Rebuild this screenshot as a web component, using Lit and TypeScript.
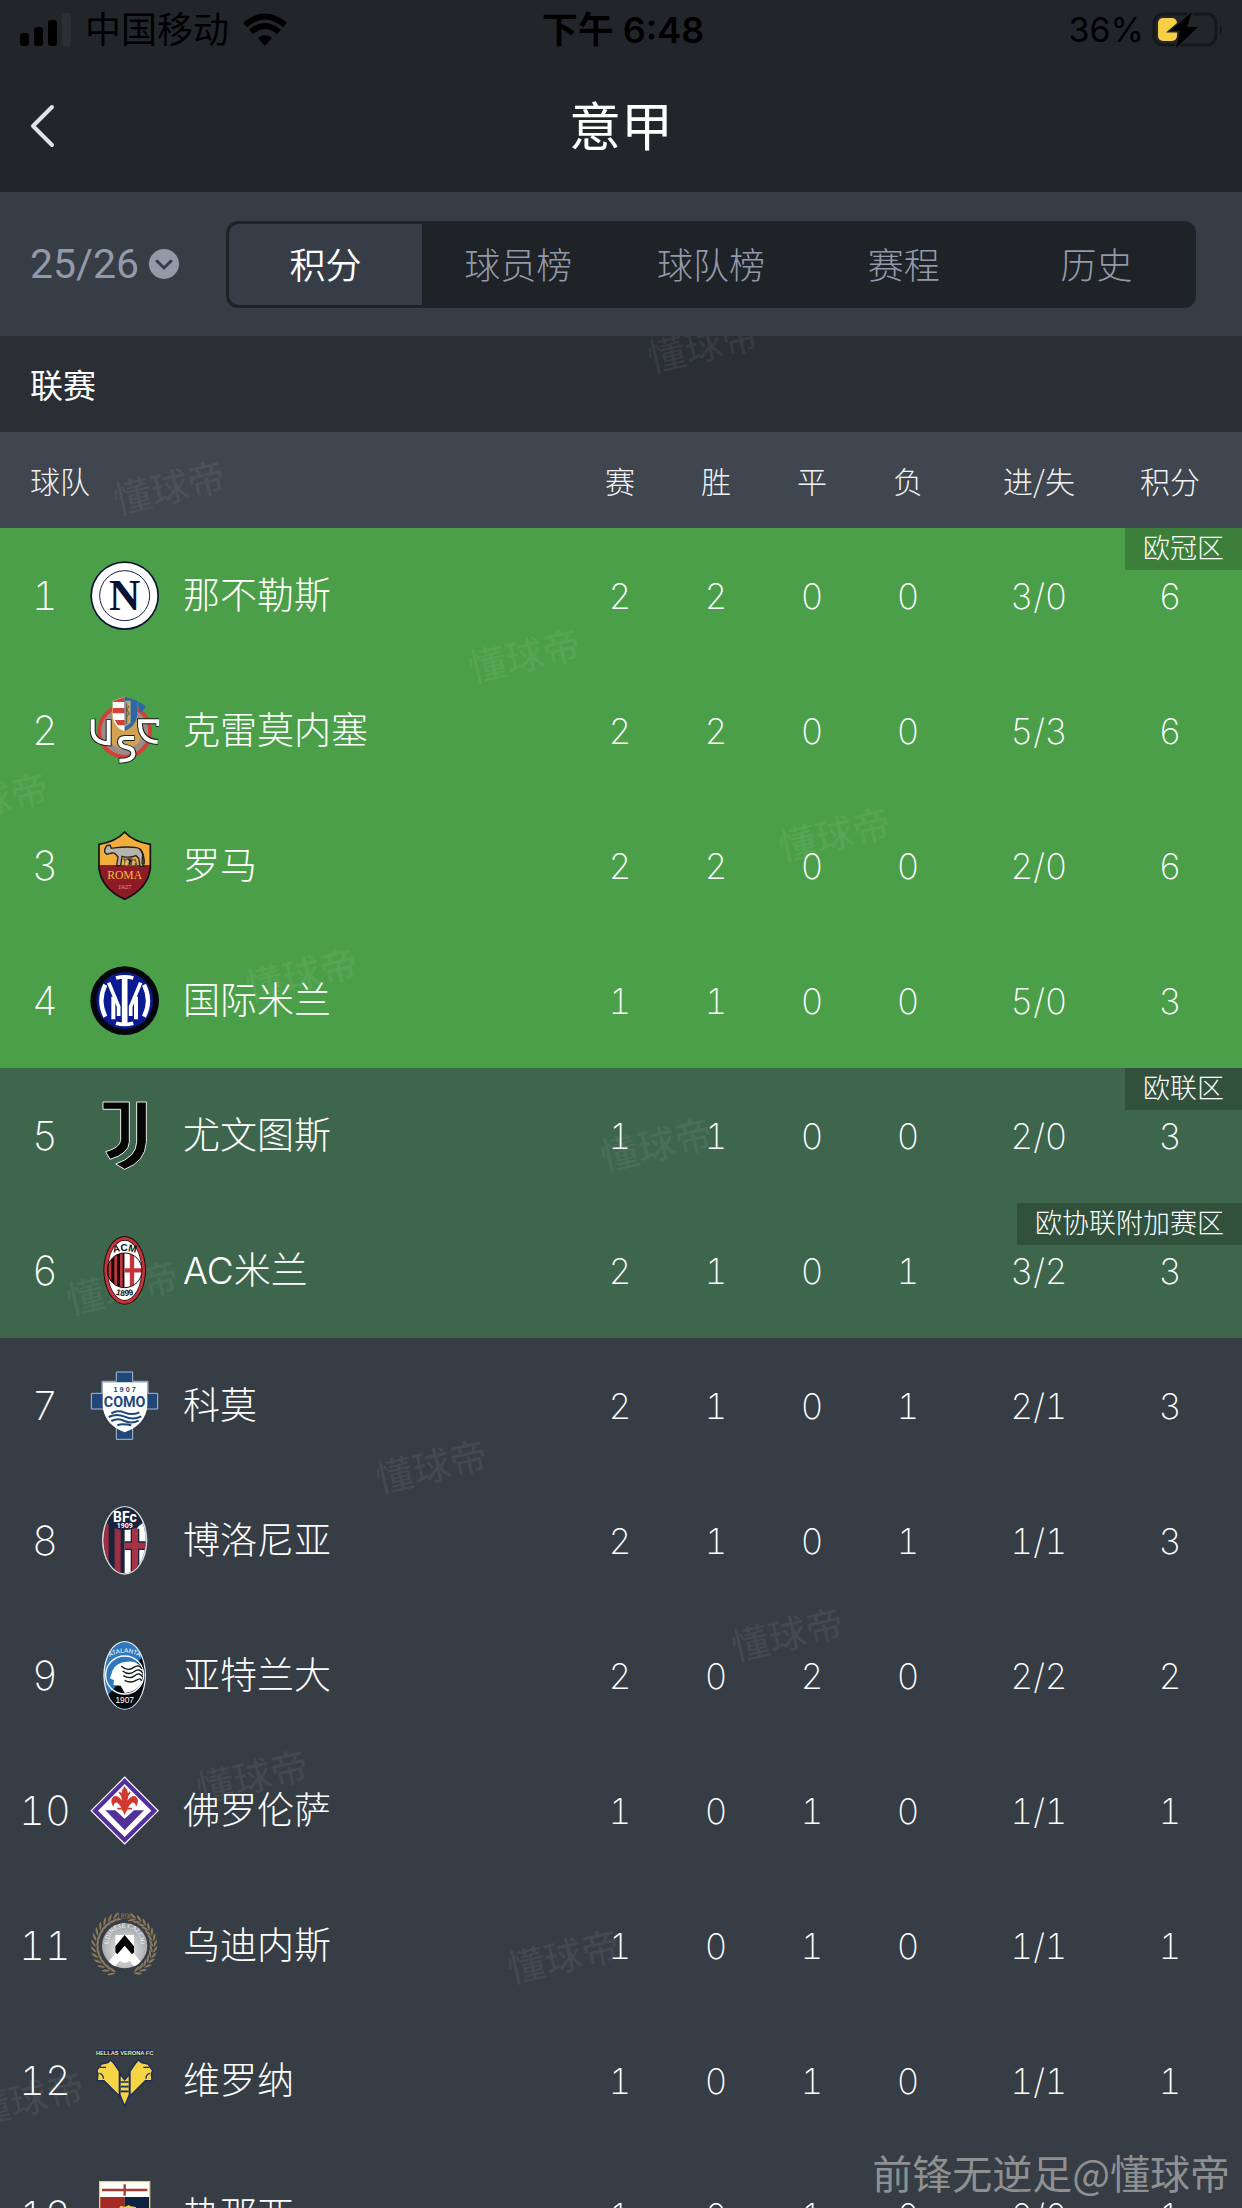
import { LitElement, html, svg, css, nothing } from "lit";
import { customElement, property, state } from "lit/decorators.js";

type Zone = "ucl" | "uel" | "none";

interface Team {
  rank: number;
  id: string;
  name: string;
  stats: string[];
  zone: Zone;
  badge?: string;
}

const TEAMS: Team[] = [
  { rank: 1, id: "napoli", name: "那不勒斯", stats: ["2", "2", "0", "0", "3/0", "6"], zone: "ucl", badge: "欧冠区" },
  { rank: 2, id: "cremonese", name: "克雷莫内塞", stats: ["2", "2", "0", "0", "5/3", "6"], zone: "ucl" },
  { rank: 3, id: "roma", name: "罗马", stats: ["2", "2", "0", "0", "2/0", "6"], zone: "ucl" },
  { rank: 4, id: "inter", name: "国际米兰", stats: ["1", "1", "0", "0", "5/0", "3"], zone: "ucl" },
  { rank: 5, id: "juventus", name: "尤文图斯", stats: ["1", "1", "0", "0", "2/0", "3"], zone: "uel", badge: "欧联区" },
  { rank: 6, id: "milan", name: "AC米兰", stats: ["2", "1", "0", "1", "3/2", "3"], zone: "uel", badge: "欧协联附加赛区" },
  { rank: 7, id: "como", name: "科莫", stats: ["2", "1", "0", "1", "2/1", "3"], zone: "none" },
  { rank: 8, id: "bologna", name: "博洛尼亚", stats: ["2", "1", "0", "1", "1/1", "3"], zone: "none" },
  { rank: 9, id: "atalanta", name: "亚特兰大", stats: ["2", "0", "2", "0", "2/2", "2"], zone: "none" },
  { rank: 10, id: "fiorentina", name: "佛罗伦萨", stats: ["1", "0", "1", "0", "1/1", "1"], zone: "none" },
  { rank: 11, id: "udinese", name: "乌迪内斯", stats: ["1", "0", "1", "0", "1/1", "1"], zone: "none" },
  { rank: 12, id: "verona", name: "维罗纳", stats: ["1", "0", "1", "0", "1/1", "1"], zone: "none" },
  { rank: 13, id: "genoa", name: "热那亚", stats: ["1", "0", "1", "0", "0/0", "1"], zone: "none" },
];

const COLUMNS = ["赛", "胜", "平", "负", "进/失", "积分"];
const TABS = ["积分", "球员榜", "球队榜", "赛程", "历史"];

/* Centres of the repeated brand mark, relative to the board. */
const MARKS: [number, number][] = [
  [703, 8], [169, 150], [524, 318], [-8, 462], [834, 497], [301, 637], [656, 807],
  [122, 950], [431, 1129], [787, 1297], [252, 1439], [563, 1619], [28, 1761],
];

const leaves = () => {
  const out = [];
  for (let i = 0; i < 13; i++) {
    const a = 14 + i * 11.5;
    for (const side of [-1, 1]) {
      const t = ((90 + side * (176 - a)) * Math.PI) / 180;
      const x = 104 + Math.cos(t + Math.PI) * -86;
      const y = 104 + Math.sin(t) * -86;
      const deg = (t * 180) / Math.PI;
      out.push(svg`<g transform="translate(${x} ${y}) rotate(${-deg + side * 90})">
        <path d="M0 0Q10 -14 24 -14Q16 -2 0 0ZM0 2Q12 12 24 10Q14 -2 0 2Z" fill="#8d7a5c"/></g>`);
    }
  }
  return out;
};

const CRESTS: Record<string, unknown> = {
  napoli: svg`
    <circle cx="104" cy="104" r="103" fill="#0a1233"/><circle cx="104" cy="104" r="98" fill="#fff"/>
    <circle cx="104" cy="104" r="75" fill="none" stroke="#1a2145" stroke-width="3"/>
    <text x="104" y="146" class="serif" font-size="130" font-weight="700" fill="#0a1233">N</text>`,
  cremonese: svg`
    <circle cx="104" cy="106" r="76" fill="#d3a152" stroke="#d2403a" stroke-width="13"/>
    <circle cx="104" cy="106" r="62" fill="none" stroke="#9a8c8c" stroke-width="16"/>
    <path d="M66 34Q104 72 142 34V132Q104 150 66 132Z" fill="#d3a152"/>
    <path d="M68 14L104 2V106Q72 94 68 62Z" fill="#fff"/>
    <path d="M70 14L104 3V18H68ZM68 36H104V52H68ZM74 72H104V88H84Z" fill="#d2403a"/>
    <path d="M104 2L142 14V58Q138 92 104 106Z" fill="#2f66a8"/>
    <path d="M142 18Q158 20 168 34L152 50Z" fill="#2f66a8"/>
    <path d="M106 14H122V80L106 92Z" fill="#b9a873"/><path d="M110 22V84M118 30L110 40L118 52L110 62" stroke="#594f37" stroke-width="3" fill="none"/>
    <g fill="none" stroke-linejoin="miter">
      <path d="M8 68V104Q10 140 56 142V70M134 126H104Q90 126 90 138Q90 150 110 154Q132 158 130 176Q126 194 86 194M206 92V76H150V88Q154 136 204 138" stroke="#17201a" stroke-width="18"/>
      <path d="M8 70V104Q10 140 56 142V72M132 126H104Q90 126 90 138Q90 150 110 154Q132 158 130 176Q126 194 88 194M205 90V76H150V88Q154 136 203 138" stroke="#fff" stroke-width="12"/>
    </g>`,
  roma: svg`
    <path d="M104 3Q130 32 181 40V112Q174 172 104 205Q34 172 27 112V40Q78 32 104 3Z" fill="#f1ae3c"/>
    <path d="M27 102H181V112Q174 172 104 205Q34 172 27 112Z" fill="#8d1b26"/>
    <path d="M44 56L50 44L60 42L64 52L80 50Q110 46 140 50Q156 54 158 70L156 96L162 106H150L146 82L138 74Q120 82 96 76L92 104H80L84 78Q74 64 66 66L50 70L44 64Z" fill="#b5b3ad" stroke="#23201c" stroke-width="4"/>
    <path d="M150 54Q164 70 162 100" fill="none" stroke="#23201c" stroke-width="5"/>
    <path d="M102 82L112 104M110 80L126 86L120 106M134 84L140 106" stroke="#57534c" stroke-width="6"/>
    <path d="M106 88Q114 80 118 92L114 104H102ZM126 90Q134 82 138 94L134 104H124Z" fill="#d9b567" stroke="#4a3c22" stroke-width="2"/>
    <text x="104" y="144" class="serif" font-size="35" fill="#f3bd4a">ROMA</text>
    <text x="104" y="173" class="serif" font-size="20" fill="#dba98c">1927</text>
    <path d="M104 3Q130 32 181 40V112Q174 172 104 205Q34 172 27 112V40Q78 32 104 3Z" fill="none" stroke="#111" stroke-width="5"/>`,
  inter: svg`
    <circle cx="104" cy="104" r="103" fill="#05070d"/><circle cx="104" cy="104" r="85" fill="#0b1a92"/>
    <g fill="none" stroke="#fff">
      <path d="M104 34V174" stroke-width="17"/>
      <path d="M78 36Q104 29 130 36M78 172Q104 179 130 172" stroke-width="11"/>
      <path d="M46 56Q22 104 46 152M162 56Q186 104 162 152" stroke-width="13"/>
      <path d="M70 160V92M138 160V92" stroke-width="12"/>
      <path d="M56 50L86 122V150M152 50L122 122V150" stroke-width="11"/>
    </g>`,
  juventus: svg`
    <g fill="#050505" stroke="#e9efe9" stroke-width="3">
      <path d="M39 3H118V124Q116 158 60 175L47 152Q90 140 92 118V25H39Z"/>
      <path d="M140 3H169V124Q166 182 104 205L77 189Q140 168 140 122Z"/>
    </g>`,
  milan: svg`
    <ellipse cx="104" cy="103" rx="64" ry="103" fill="#1a0d0d"/>
    <ellipse cx="104" cy="103" rx="61" ry="100" fill="#c5343a"/>
    <ellipse cx="104" cy="103" rx="52" ry="91" fill="#15100f"/>
    <ellipse cx="104" cy="103" rx="50" ry="89" fill="#fff"/>
    <clipPath id="acm"><circle cx="104" cy="103" r="52"/></clipPath>
    <g clip-path="url(#acm)">
      <path d="M50 50H104V156H50Z" fill="#120c0c"/><path d="M60 50V156M77 50V156M94 50V156" stroke="#c5343a" stroke-width="8"/>
      <path d="M104 50H160V156H104Z" fill="#fff"/><path d="M126 50V156M104 103H160" stroke="#c5343a" stroke-width="13"/>
    </g>
    <circle cx="104" cy="103" r="52" fill="none" stroke="#15100f" stroke-width="3"/>
    <path id="acm-t" d="M62 54Q104 36 146 54" fill="none"/><path id="acm-b" d="M68 172Q104 188 140 172" fill="none"/>
    <text class="sans" font-size="30" font-weight="700" fill="#111"><textPath href="#acm-t" startOffset="50%">ACM</textPath></text>
    <text class="sans" font-size="25" font-weight="700" fill="#111"><textPath href="#acm-b" startOffset="50%">1899</textPath></text>`,
  como: svg`
    <path d="M79 3H128V31H174V67H203V114H168Q154 146 128 158V205H79V158Q54 146 40 114H4V67H36V31H79Z" fill="#1f4778" stroke="#a9bdd6" stroke-width="3"/>
    <path d="M38 34H172V104Q168 160 104 184Q42 160 38 104Z" fill="#fff"/>
    <text x="104" y="62" class="sans" font-size="22" font-weight="700" fill="#1f4778">1 9 0 7</text>
    <text x="104" y="107" class="cond" font-size="43" font-weight="700" fill="#1f4778">COMO</text>
    <g fill="none" stroke="#1f4778" stroke-width="6"><path d="M64 127Q82 116 104 125T148 124M56 138Q80 126 104 137T154 136M64 150Q84 140 104 150T146 149M82 163Q96 156 124 163"/></g>`,
  bologna: svg`
    <clipPath id="bfc"><ellipse cx="104" cy="103" rx="63" ry="99"/></clipPath>
    <ellipse cx="104" cy="103" rx="68" ry="103" fill="#d5d8dc"/>
    <g clip-path="url(#bfc)">
      <path d="M30 0H180V207H30Z" fill="#18233c"/>
      <path d="M47 50V207M83 66V207" stroke="#9c2f41" stroke-width="18"/>
      <path d="M104 68H140L152 52L180 40V207H104Z" fill="#fff"/>
      <path d="M135 68V207M104 119H180" stroke="#18233c" stroke-width="26"/>
      <path d="M135 68V207M104 119H180" stroke="#a93145" stroke-width="18"/>
      <path d="M40 0H170V40Q140 72 104 72Q66 72 40 40Z" fill="#18233c"/>
    </g>
    <text x="105" y="47" class="cond" font-size="42" font-weight="700" fill="#fff">BFc</text>
    <text x="104" y="67" class="cond" font-size="21" font-weight="700" fill="#fff">1909</text>`,
  atalanta: svg`
    <clipPath id="ata"><ellipse cx="104" cy="103" rx="60" ry="100"/></clipPath>
    <ellipse cx="104" cy="103" rx="64" ry="103" fill="#e9eef2"/>
    <g clip-path="url(#ata)"><path d="M30 0H180V207H30Z" fill="#2e78bd"/><path d="M180 22L38 180V207H180Z" fill="#070a0e"/></g>
    <circle cx="104" cy="102" r="57" fill="none" stroke="#fff" stroke-width="4"/>
    <path d="M158 84Q144 58 112 62Q78 64 68 88L60 112L72 118L70 132L92 134L104 156Q140 154 156 124Z" fill="#fff"/>
    <path d="M94 76Q112 92 130 80T156 84M98 90Q116 104 132 92T158 96M100 104Q120 116 134 104T158 108M104 118Q122 128 138 118T154 120" fill="none" stroke="#10151c" stroke-width="4"/>
    <path id="ata-t" d="M56 50Q104 20 152 50" fill="none"/>
    <text class="sans" font-size="19" font-weight="500" fill="#fff"><textPath href="#ata-t" startOffset="50%">ATALANTA</textPath></text>
    <text x="104" y="186" class="sans" font-size="25" fill="#fff">1907</text>`,
  fiorentina: svg`
    <path d="M104 1L207 104L104 206L1 104Z" fill="#fff"/>
    <path d="M104 6L202 104L104 201L6 104Z" fill="#52309a"/>
    <path d="M104 24L184 104L104 183L24 104Z" fill="#fff"/>
    <path d="M46 103H76L104 128L132 103H162L104 162Z" fill="#52309a"/>
    <path d="M104 30Q120 52 112 74Q126 54 138 62Q150 74 138 92Q136 78 126 80Q114 90 114 98L108 108L104 118L100 108L94 98Q94 90 82 80Q72 78 70 92Q58 74 70 62Q82 54 96 74Q88 52 104 30Z" fill="#d0392f"/>
    <path d="M82 98H126M88 48L96 60M120 48L112 60" stroke="#d0392f" stroke-width="5"/>`,
  udinese: svg`
    <defs><radialGradient id="udg" cx=".5" cy=".6" r=".6"><stop offset="0" stop-color="#f4f4f4"/><stop offset="1" stop-color="#9a9ca0"/></radialGradient>
    <clipPath id="udc"><circle cx="104" cy="104" r="68"/></clipPath></defs>
    ${leaves()}
    <text x="104" y="23" class="serif" font-size="25" fill="#8d7a5c">1896</text>
    <circle cx="104" cy="104" r="68" fill="url(#udg)"/>
    <g clip-path="url(#udc)">
      <path d="M76 72H132V142Q118 152 104 156Q90 152 76 142Z" fill="#fff"/>
      <path d="M104 94L152 152L136 172L104 130L72 172L56 152Z" fill="#fff"/>
      <path d="M104 72L132 106V124L126 130L104 104L82 130L76 124V106Z" fill="#050505"/>
    </g>
    <path id="ud-t" d="M56 98Q58 52 104 50Q150 52 152 98" fill="none"/>
    <text class="serif" font-size="19" fill="#fff"><textPath href="#ud-t" startOffset="50%">UDINESE CALCIO</textPath></text>`,
  verona: svg`
    <path d="M21 12H186V29H21Z" fill="#1b2a5c"/>
    <text x="104" y="27" class="sans" font-size="17" font-weight="700" fill="#f6e27a">HELLAS VERONA FC</text>
    <g fill="#f5d445" stroke="#1b2a5c" stroke-width="4">
      <path d="M62 42L70 50L88 76V150L42 104H22L24 82L20 74L34 54L54 50Z"/>
      <path d="M146 42L138 50L120 76V150L166 104H186L184 82L188 74L174 54L154 50Z"/>
      <path d="M90 84L104 102L118 84V146L104 180L90 146Z"/>
    </g>
    <path d="M30 64L48 64M28 82Q40 84 40 98M178 64L160 64M180 82Q168 84 168 98" fill="none" stroke="#1b2a5c" stroke-width="4"/>
    <path d="M92 108H116M92 122H116M92 136H116" stroke="#1b2a5c" stroke-width="5"/>`,
  genoa: svg`
    <path d="M27 0H181V130Q170 185 104 206Q38 185 27 130Z" fill="#f2d35c"/>
    <path d="M31 4H177V48H31Z" fill="#fff"/>
    <path d="M36 27H172M104 10V44" stroke="#a33a36" stroke-width="7"/>
    <path d="M31 48H104V202Q40 182 31 130Z" fill="#a52a26"/><path d="M104 48H177V130Q168 182 104 202Z" fill="#0e2340"/>
    <path d="M86 84L92 74L104 78L116 72L122 76L138 78L136 88L124 92L130 140L104 150L84 130Z" fill="#f2c94a"/>`,
};

@customElement("team-crest")
export class TeamCrest extends LitElement {
  @property() team = "";

  static styles = css`
    :host { display: block; position: relative; z-index: 1; width: 69px; height: 69px; }
    .crest { display: block; width: 100%; height: 100%; }
    text { text-anchor: middle; }
    .serif { font-family: "Liberation Serif", serif; }
    .sans { font-family: "Liberation Sans", sans-serif; }
    .cond { font-family: "Roboto", sans-serif; }
  `;

  render() {
    return html`<svg class="crest" viewBox="0 0 207 207" aria-hidden="true">${CRESTS[this.team] ?? nothing}</svg>`;
  }
}

@customElement("status-bar")
export class StatusBar extends LitElement {
  static styles = css`
    :host { display: grid; grid-template-columns: 1fr auto 1fr; align-items: center; height: 60px; padding: 0 16px 0 20px; color: #000; font: 400 34px/44px "Inter", "Noto Sans CJK SC", sans-serif; }
    .side { display: flex; align-items: center; gap: 13px; }
    .end { justify-content: flex-end; gap: 8px; }
    .time { font-weight: 600; font-size: 36px; }
    .carrier { font-size: 36px; }
    svg { display: block; }
  `;

  render() {
    return html`
      <div class="side">
        <svg width="52" height="34" viewBox="0 0 52 34" aria-hidden="true">
          <rect x="0" y="20" width="9" height="13" rx="3"/><rect x="14" y="14" width="9" height="19" rx="3"/>
          <rect x="28" y="7" width="9" height="26" rx="3"/><rect x="42" y="0" width="9" height="33" rx="3" fill="#2d2f36"/>
        </svg>
        <span class="carrier">中国移动</span>
        <svg width="46" height="34" viewBox="0 0 46 34" aria-hidden="true">
          <path d="M16 25Q23 19 30 25L23 33Z"/>
          <path d="M9 19Q23 7 37 19M3 12Q23 -5 43 12" fill="none" stroke="#000" stroke-width="6"/>
        </svg>
      </div>
      <span class="time">下午 6:48</span>
      <div class="side end">
        <span>36%</span>
        <svg width="74" height="36" viewBox="0 0 74 36" aria-hidden="true">
          <rect x="2" y="2" width="62" height="31" rx="9" fill="none" stroke="#15181b" stroke-width="3"/>
          <path d="M68 12Q72 17 68 23Z" fill="#15181b"/>
          <rect x="6" y="6" width="19" height="23" rx="5" fill="#f7cf46"/>
          <path d="M40 0L18 19H28L24 36L46 15H35Z" stroke="#22262a" stroke-width="3" paint-order="stroke"/>
        </svg>
      </div>`;
  }
}

@customElement("app-root")
export class AppRoot extends LitElement {
  @state() private tab = 0;

  static styles = css`
    :host {
      display: block; position: relative; height: 100vh; overflow: hidden;
      background: #363d45; color: #fff;
      font-family: "Inter", "Noto Sans CJK SC", sans-serif; font-weight: 300;
    }
    .top { background: #22262a; }
    .nav { display: grid; grid-template-columns: 92px 1fr 92px; align-items: center; height: 132px; }
    .back { display: flex; align-items: center; height: 96px; padding: 0 0 0 28px; border: 0; background: none; }
    .title { margin: 0; padding-bottom: 4px; text-align: center; font: 400 52px/76px "Noto Sans CJK SC", sans-serif; }
    .bar { display: flex; align-items: center; gap: 46px; height: 144px; padding: 0 46px 0 30px; }
    .season { display: flex; align-items: center; gap: 8px; color: #9499aa; }
    .season select {
      appearance: none; margin: 0; padding: 0; border: 0; background: none; color: inherit;
      font: 400 41px/60px "Roboto", sans-serif;
    }
    .tabs { flex: 1; display: grid; grid-template-columns: repeat(5, 1fr); height: 87px; padding: 3px; border-radius: 12px; background: #1e2327; box-sizing: border-box; }
    .tab { border: 0; padding: 0 0 2px; background: none; color: #9499aa; font: 300 36px/54px "Noto Sans CJK SC", sans-serif; }
    .tab.on { background: #373d47; color: #fff; font-weight: 350; border-radius: 10px 0 0 10px; }
    .board { position: relative; overflow: hidden; }
    .section { margin: 0; padding: 0 30px; background: #292f35; font: 400 33px/96px "Noto Sans CJK SC", sans-serif; }
    table { width: 100%; border-collapse: collapse; table-layout: fixed; }
    th, td { padding: 0; font-weight: 300; text-align: center; }
    .c-rank { width: 90px; } .c-crest { width: 69px; } .c-stat { width: 96px; } .c-goal { width: 166px; } .c-pts { width: 120px; }
    thead { background: #3f464f; font-size: 30px; line-height: 96px; color: #f2f3f5; }
    thead th { font-family: "Noto Sans CJK SC", sans-serif; }
    thead .team { padding-left: 30px; text-align: left; }
    .row { height: 135px; font-size: 35px; line-height: 54px; font-variant-numeric: tabular-nums; }
    .row td { font-weight: 200; }
    .row .name, .row .badge { font-weight: 300; }
    .ucl { background: #4c9f49; } .uel { background: #3e664d; } .none { background: #363d45; }
    .rank { font-size: 40px; }
    .name { padding-left: 24px; text-align: left; font-size: 37px; }
    .pts { padding-right: 24px; position: relative; }
    .badge { position: absolute; top: 0; right: 0; padding: 0 18px; background: rgba(0, 0, 0, 0.2); font-size: 27px; line-height: 42px; white-space: nowrap; }
    .mark { position: absolute; transform: translate(-50%, -50%) rotate(-13deg); color: rgba(255, 255, 255, 0.06); font: 500 38px/44px "Noto Sans CJK SC", sans-serif; white-space: nowrap; pointer-events: none; }
    .credit { position: absolute; right: 12px; bottom: 6px; color: rgba(160, 160, 160, 0.85); font: 400 40px/60px "Noto Sans CJK SC", sans-serif; z-index: 2; }
  `;

  private row(t: Team) {
    return html`<tr class="row ${t.zone}">
      <td class="rank">${t.rank}</td>
      <td><team-crest team=${t.id}></team-crest></td>
      <td class="name">${t.name}</td>
      ${t.stats.map((s, i) =>
        i < 5
          ? html`<td>${s}</td>`
          : html`<td class="pts">${s}${t.badge ? html`<span class="badge">${t.badge}</span>` : nothing}</td>`
      )}
    </tr>`;
  }

  render() {
    return html`
      <header class="top">
        <status-bar></status-bar>
        <div class="nav">
          <button class="back" aria-label="返回">
            <svg width="28" height="46" viewBox="0 0 28 46" aria-hidden="true"><path d="M24 4L5 23L24 42" fill="none" stroke="#e2e3e4" stroke-width="4" stroke-linecap="round" stroke-linejoin="round"/></svg>
          </button>
          <h1 class="title">意甲</h1>
        </div>
      </header>
      <div class="bar">
        <label class="season">
          <select aria-label="赛季"><option>25/26</option></select>
          <svg width="32" height="32" viewBox="0 0 32 32" aria-hidden="true"><circle cx="16" cy="16" r="15" fill="#9499aa"/><path d="M9 13L16 20L23 13" fill="none" stroke="#373d46" stroke-width="3" stroke-linecap="round"/></svg>
        </label>
        <nav class="tabs" role="tablist">
          ${TABS.map((t, i) => html`<button class="tab ${i === this.tab ? "on" : ""}" role="tab" aria-selected=${i === this.tab} @click=${() => (this.tab = i)}>${t}</button>`)}
        </nav>
      </div>
      <main class="board">
        <h2 class="section">联赛</h2>
        <table>
          <colgroup>
            <col class="c-rank" /><col class="c-crest" /><col />
            <col class="c-stat" /><col class="c-stat" /><col class="c-stat" /><col class="c-stat" />
            <col class="c-goal" /><col class="c-pts" />
          </colgroup>
          <thead>
            <tr>
              <th class="team" colspan="3" scope="col">球队</th>
              ${COLUMNS.map((c, i) => html`<th class=${i === 5 ? "pts" : ""} scope="col">${c}</th>`)}
            </tr>
          </thead>
          <tbody>${TEAMS.map((t) => this.row(t))}</tbody>
        </table>
        ${MARKS.map(([x, y]) => html`<span class="mark" style="left:${x}px;top:${y}px" aria-hidden="true">懂球帝</span>`)}
      </main>
      <div class="credit">前锋无逆足@懂球帝</div>`;
  }
}
